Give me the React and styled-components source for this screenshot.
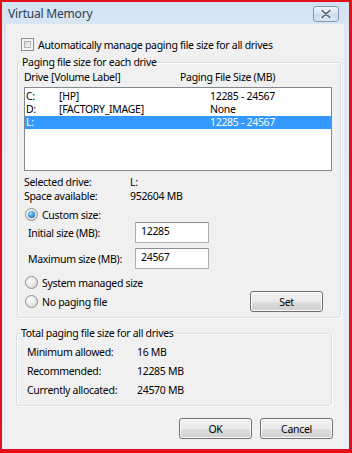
import React from "react";
import styled, { createGlobalStyle } from "styled-components";

const GlobalStyle = createGlobalStyle`
  html, body { margin: 0; padding: 0; background: #fff; }
  body {
    font-family: "Noto Sans", "Open Sans", sans-serif;
    font-size: 10.5px;
    letter-spacing: -0.3px;
    color: #000;
  }
`;

const Window = styled.div`
  width: 352px;
  height: 453px;
  box-sizing: border-box;
  border: solid #e3101a;
  border-width: 2px 3px 4px 2px;
  background: linear-gradient(#d2e1f1, #dfe9f5 40px, #e6eef7);
  display: flex;
  flex-direction: column;
`;

const TitleBar = styled.div`
  height: 22px;
  flex: none;
  display: flex;
  align-items: center;
  justify-content: space-between;
  padding: 0 10px 0 6px;
`;

const Title = styled.span`
  font-size: 12px;
  letter-spacing: -0.2px;
  color: #2b3f55;
`;

const CloseButton = styled.div`
  width: 24px;
  height: 14px;
  border: 1px solid #8297b0;
  border-radius: 3px;
  background: linear-gradient(#eef4fa, #d7e3f0 50%, #c8d7e8 51%, #d9e5f1);
  display: flex;
  align-items: center;
  justify-content: center;
  margin-top: 1px;
`;

const Client = styled.div`
  flex: 1;
  margin: 0 5px 2px 4px;
  background: #f0f0f0;
  display: flex;
  flex-direction: column;
`;

const CheckRow = styled.label`
  display: flex;
  align-items: center;
  gap: 4px;
  height: 13px;
  margin: 14px 0 0 15px;
`;

const CheckBox = styled.span`
  width: 11px;
  height: 11px;
  border: 1px solid #8e8f8f;
  background: #f4f4f4;
  position: relative;
  &::after {
    content: "";
    position: absolute;
    inset: 2px;
    border: 1px solid #b4b4b4;
    background: linear-gradient(135deg, #d6d6d6, #f8f8f8);
  }
`;

const Group = styled.fieldset`
  margin: ${(p) => p.$top}px ${(p) => p.$right}px 0 ${(p) => p.$left}px;
  padding: 0 8px ${(p) => p.$bottom}px 6px;
  border: 1px solid #d5dfe5;
  border-radius: 3px;
  box-shadow: inset 1px 1px 0 #fff, 1px 1px 0 #fff;
  min-width: 0;
`;

const Legend = styled.legend`
  margin-left: -3px;
  padding: 0 1px;
  line-height: 14px;
`;

const HeaderRow = styled.div`
  display: flex;
  line-height: 14px;
  margin-top: 1px;
`;

const ListBox = styled.div`
  margin-top: 3px;
  height: 80px;
  border: 1px solid #828790;
  background: #fff;
  padding-top: 2px;
`;

const ListRow = styled.div`
  display: flex;
  height: 13px;
  line-height: 13px;
  padding-left: 1px;
  background: ${(p) => (p.$selected ? "#3399ff" : "transparent")};
  color: ${(p) => (p.$selected ? "#fff" : "#000")};
`;

const Cell = styled.span`
  width: ${(p) => p.$w}px;
  flex: none;
  white-space: nowrap;
`;

const InfoRow = styled.div`
  display: flex;
  line-height: 14px;
  margin-top: ${(p) => p.$top || 0}px;
`;

const RadioRow = styled.label`
  display: flex;
  align-items: center;
  gap: 4px;
  height: ${(p) => p.$h || 13}px;
  margin-top: ${(p) => p.$top}px;
  padding-left: 1px;
`;

const Radio = styled.span`
  width: 11px;
  height: 11px;
  flex: none;
  border-radius: 50%;
  border: 1px solid #8e8f8f;
  background: radial-gradient(circle at 35% 35%, #ffffff, #e2e2e2 60%, #cfcfcf);
  position: relative;
  ${(p) =>
    p.$checked &&
    `
    &::after {
      content: "";
      position: absolute;
      inset: 2px;
      border-radius: 50%;
      background: radial-gradient(circle at 40% 35%, #a6dcf8, #2f8fd6 55%, #0b4a8c);
    }
  `}
`;

const FieldRow = styled.div`
  display: flex;
  align-items: center;
  margin-top: ${(p) => p.$top}px;
  padding-left: 4px;
`;

const FieldLabel = styled.span`
  width: 107px;
  flex: none;
`;

const TextInput = styled.input`
  width: 74px;
  height: 21px;
  box-sizing: border-box;
  border: 1px solid #abadb3;
  border-top-color: #8c8f96;
  background: #fff;
  font: inherit;
  letter-spacing: inherit;
  padding: 0 0 3px 5px;
  margin: 0;
  color: #000;
  outline: none;
`;

const Spacer = styled.span`
  flex: 1;
`;

const Button = styled.button`
  width: ${(p) => p.$w || 73}px;
  height: 21px;
  flex: none;
  box-sizing: border-box;
  border: 1px solid #707070;
  border-radius: 3px;
  background: linear-gradient(#f2f2f2, #ebebeb 50%, #dddddd 51%, #cfcfcf);
  box-shadow: inset 0 0 0 1px #fcfcfc;
  font: inherit;
  letter-spacing: inherit;
  color: #000;
  padding: 0;
  margin-right: ${(p) => p.$mr || 0}px;
`;

const TotalRow = styled.div`
  display: flex;
  line-height: 14px;
  margin-top: ${(p) => p.$top}px;
  padding-left: 4px;
`;

const Footer = styled.div`
  display: flex;
  justify-content: flex-end;
  gap: 8px;
  margin: 12px 11px 0 0;
`;

const drives = [
  { d: "C:", label: "[HP]", size: "12285 - 24567" },
  { d: "D:", label: "[FACTORY_IMAGE]", size: "None" },
  { d: "L:", label: "", size: "12285 - 24567", selected: true },
];

export default function App() {
  return (
    <>
      <GlobalStyle />
      <Window>
        <TitleBar>
          <Title>Virtual Memory</Title>
          <CloseButton>
            <svg width="12" height="10" viewBox="0 0 12 10">
              <path
                d="M2 1.5 L10 8.5 M10 1.5 L2 8.5"
                stroke="#fff"
                strokeWidth="3.6"
                strokeLinecap="round"
              />
              <path
                d="M2 1.5 L10 8.5 M10 1.5 L2 8.5"
                stroke="#5d6f85"
                strokeWidth="1.8"
                strokeLinecap="round"
              />
            </svg>
          </CloseButton>
        </TitleBar>
        <Client>
          <CheckRow>
            <CheckBox />
            Automatically manage paging file size for all drives
          </CheckRow>

          <Group $top={4} $left={11} $right={3} $bottom={5}>
            <Legend>Paging file size for each drive</Legend>
            <HeaderRow>
              <Cell $w={27}>Drive</Cell>
              <Cell $w={129}>[Volume Label]</Cell>
              <Cell $w={120}>Paging File Size (MB)</Cell>
            </HeaderRow>
            <ListBox>
              {drives.map((r) => (
                <ListRow key={r.d} $selected={r.selected}>
                  <Cell $w={33}>{r.d}</Cell>
                  <Cell $w={151}>{r.label}</Cell>
                  <Cell $w={100}>{r.size}</Cell>
                </ListRow>
              ))}
            </ListBox>
            <InfoRow $top={4}>
              <Cell $w={106}>Selected drive:</Cell>
              <span>L:</span>
            </InfoRow>
            <InfoRow>
              <Cell $w={106}>Space available:</Cell>
              <span>952604 MB</span>
            </InfoRow>
            <RadioRow $top={5}>
              <Radio $checked />
              Custom size:
            </RadioRow>
            <FieldRow $top={1}>
              <FieldLabel>Initial size (MB):</FieldLabel>
              <TextInput defaultValue="12285" />
            </FieldRow>
            <FieldRow $top={5}>
              <FieldLabel>Maximum size (MB):</FieldLabel>
              <TextInput defaultValue="24567" />
            </FieldRow>
            <RadioRow $top={7}>
              <Radio />
              System managed size
            </RadioRow>
            <RadioRow $top={2} $h={21}>
              <Radio />
              No paging file
              <Spacer />
              <Button $mr={9}>Set</Button>
            </RadioRow>
          </Group>

          <Group $top={8} $left={10} $right={12} $bottom={8}>
            <Legend>Total paging file size for all drives</Legend>
            <TotalRow $top={5}>
              <Cell $w={110}>Minimum allowed:</Cell>
              <span>16 MB</span>
            </TotalRow>
            <TotalRow $top={5}>
              <Cell $w={110}>Recommended:</Cell>
              <span>12285 MB</span>
            </TotalRow>
            <TotalRow $top={5}>
              <Cell $w={110}>Currently allocated:</Cell>
              <span>24570 MB</span>
            </TotalRow>
          </Group>

          <Footer>
            <Button>OK</Button>
            <Button>Cancel</Button>
          </Footer>
        </Client>
      </Window>
    </>
  );
}
